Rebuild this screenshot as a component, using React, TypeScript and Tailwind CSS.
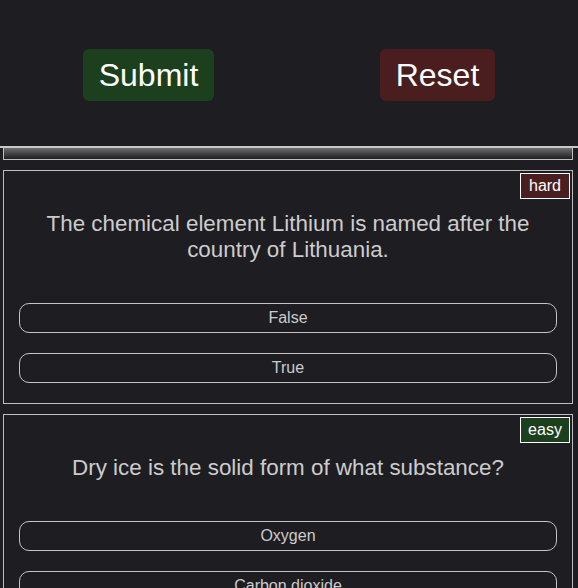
import React from "react";

type Question = {
  question: string;
  difficulty: "easy" | "hard";
  answers: string[];
};

const questions: Question[] = [
  {
    question: "The chemical element Lithium is named after the country of Lithuania.",
    difficulty: "hard",
    answers: ["False", "True"],
  },
  {
    question: "Dry ice is the solid form of what substance?",
    difficulty: "easy",
    answers: ["Oxygen", "Carbon dioxide", "Nitrogen", "Helium"],
  },
];

const QuestionCard = ({ q }: { q: Question }) => {
  return (
    <div className="relative mt-[10px] ml-[3px] w-[570px] border border-[#bdbdbd] bg-[#1e1d22]">
      <span
        className={
          "absolute top-[2px] right-[2px] w-[50px] border border-white text-center text-base leading-6 text-white " +
          (q.difficulty === "hard" ? "bg-[#4a1e1f]" : "bg-[#1c3f1d]")
        }
      >
        {q.difficulty}
      </span>
      <p className="px-[15px] pt-[40px] text-center text-[22.4px] leading-[26px] text-[#cccccc]">
        {q.question}
      </p>
      <div className="mt-[40px] flex flex-col gap-5 px-[15px] pb-5">
        {q.answers.map((a) => (
          <button
            key={a}
            className="h-[30px] w-full rounded-[10px] border border-[#c4c4c4] bg-transparent text-base text-[#cccccc]"
          >
            {a}
          </button>
        ))}
      </div>
    </div>
  );
};

export default function App() {
  return (
    <div className="min-h-[588px] bg-[#1e1d22] font-['Liberation_Sans',Arial,sans-serif]">
      <header className="flex h-[148px] items-center justify-around border-b-2 border-[#c8c8c8] bg-[#1e1d22] pt-[4px]">
        <button className="rounded-md bg-[#1c3f1d] px-4 py-2 text-[32px] leading-9 text-white">
          Submit
        </button>
        <button className="rounded-md bg-[#4a1e1f] px-4 py-2 text-[32px] leading-9 text-white">
          Reset
        </button>
      </header>
      <div className="ml-[3px] h-[12px] w-[570px] border-x border-b border-[#bdbdbd] bg-linear-to-b from-[#6e6e6e] to-[#1e1d22]" />
      {questions.map((q, i) => (
        <QuestionCard key={i} q={q} />
      ))}
    </div>
  );
}
